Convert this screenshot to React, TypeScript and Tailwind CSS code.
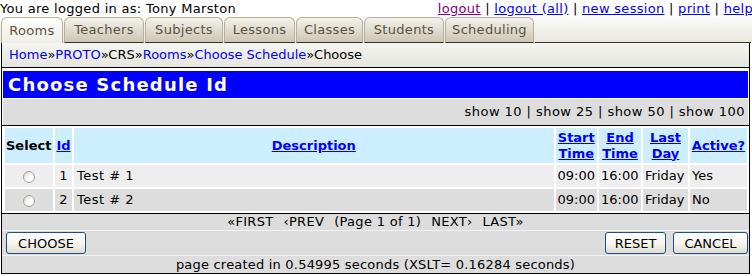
import React from 'react';

const TABS = [
  { label: 'Rooms', width: 'w-[62px]', active: true },
  { label: 'Teachers', width: 'w-[80px]' },
  { label: 'Subjects', width: 'w-[78px]' },
  { label: 'Lessons', width: 'w-[71px]' },
  { label: 'Classes', width: 'w-[67px]' },
  { label: 'Students', width: 'w-[80px]' },
  { label: 'Scheduling', width: 'w-[89px]' },
];

const ROWS = [
  { id: 1, desc: 'Test # 1', start: '09:00', end: '16:00', day: 'Friday', active: 'Yes', bg: 'bg-[#eeeeee]' },
  { id: 2, desc: 'Test # 2', start: '09:00', end: '16:00', day: 'Friday', active: 'No', bg: 'bg-[#dddddd]' },
];

const Radio = () => (
  <span className="inline-block w-[12px] h-[12px] rounded-full border border-[#a3a39a] bg-gradient-to-br from-[#cfcdc4] via-white to-white align-middle" />
);

const XpButton = ({ label, className }: { label: string; className: string }) => (
  <button className={`h-[22px] rounded-[3px] border border-[#1c4f84] bg-gradient-to-b from-white via-[#f6f5f0] to-[#e2ded0] text-[13px] text-black leading-none tracking-normal ${className}`}>
    {label}
  </button>
);

const App: React.FC = () => {
  return (
    <div className="w-[752px] h-[276px] overflow-hidden bg-white text-black text-[13px] leading-[16px] tracking-[0.3px] font-['DejaVu_Sans',sans-serif]">
      {/* logged in line */}
      <div className="flex justify-between items-center h-[17px] whitespace-nowrap">
        <span>You are logged in as: Tony Marston</span>
        <span className="mr-[-1px]">
          <a href="#" className="underline text-[#800080]">logout</a> |{' '}
          <a href="#" className="underline text-[#0000ff]">logout (all)</a> |{' '}
          <a href="#" className="underline text-[#0000ff]">new session</a> |{' '}
          <a href="#" className="underline text-[#0000ff]">print</a> |{' '}
          <a href="#" className="underline text-[#0000ff]">help</a>
        </span>
      </div>

      {/* tabs */}
      <div className="flex items-end h-[26px] pl-[1px] gap-[1px] bg-gradient-to-b from-[#fbfbf9] to-[#e7e7df]">
        {TABS.map((tab) =>
          tab.active ? (
            <div
              key={tab.label}
              className={`${tab.width} h-[26px] flex items-center justify-center rounded-t-[6px] border border-b-0 border-[#b8b09c] bg-gradient-to-b from-[#fdfdfb] to-[#efefe8] text-[#5a5244]`}
            >
              {tab.label}
            </div>
          ) : (
            <div
              key={tab.label}
              className={`${tab.width} h-[26px] flex items-center justify-center rounded-t-[6px] border border-[#b8b09c] border-b-[#3a342c] bg-gradient-to-b from-[#f3f2ec] to-[#cdc6b2] text-[#5a5244]`}
            >
              {tab.label}
            </div>
          )
        )}
        <div className="w-[216px] border-b border-[#3a342c]" />
      </div>

      {/* breadcrumbs */}
      <div className="ml-[1px] w-[749px] h-[25px] flex items-center pl-[7px] border-x border-b border-black bg-gradient-to-b from-[#f5f5f1] to-[#e6e6de] whitespace-nowrap tracking-normal">
        <a href="#" className="text-[#0000ff]">Home</a>»<a href="#" className="text-[#0000ff]">PROTO</a>»CRS»
        <a href="#" className="text-[#0000ff]">Rooms</a>»<a href="#" className="text-[#0000ff]">Choose Schedule</a>»Choose
      </div>

      {/* main panel */}
      <div className="ml-[1px] w-[749px] border-x border-b border-black">
        <div className="pt-[3px] px-[1px]">
          <div className="h-[27px] flex items-center pl-[5px] bg-[#0000ff] text-white text-[18px] font-bold tracking-[1.2px]">
            Choose Schedule Id
          </div>
          <div className="mt-[1px] h-[26px] flex items-center justify-end pr-[3px] bg-[#dddddd] tracking-[0.45px]">
            show 10 | show 25 | show 50 | show 100
          </div>
        </div>
        <div className="border-t border-black pl-[1px]">
          <table className="w-full border-separate border-spacing-[2px] tracking-normal">
            <thead>
              <tr className="bg-[#cceeff] font-bold h-[35px]">
                <th className="w-[48px] px-[1px] font-bold text-left">Select</th>
                <th className="w-[17px] px-[1px]"><a href="#" className="underline text-[#0000ff]">Id</a></th>
                <th className="px-[1px]"><a href="#" className="underline text-[#0000ff]">Description</a></th>
                <th className="w-[41px] px-[1px]"><a href="#" className="underline text-[#0000ff]">Start<br />Time</a></th>
                <th className="w-[42px] px-[1px]"><a href="#" className="underline text-[#0000ff]">End<br />Time</a></th>
                <th className="w-[45px] px-[1px]"><a href="#" className="underline text-[#0000ff]">Last<br />Day</a></th>
                <th className="w-[57px] px-[1px]"><a href="#" className="underline text-[#0000ff]">Active?</a></th>
              </tr>
            </thead>
            <tbody>
              {ROWS.map((row) => (
                <tr key={row.id} className={`${row.bg} h-[22px]`}>
                  <td className="text-center"><Radio /></td>
                  <td className="text-center">{row.id}</td>
                  <td className="px-[3px] tracking-[0.5px]">{row.desc}</td>
                  <td className="px-[2px]">{row.start}</td>
                  <td className="px-[2px]">{row.end}</td>
                  <td className="px-[2px]">{row.day}</td>
                  <td className="px-[2px]">{row.active}</td>
                </tr>
              ))}
            </tbody>
          </table>
        </div>

        <div className="border-t border-black bg-[#dddddd]">
          <div className="h-[17px] flex items-center justify-center gap-[10px] border-b border-[#f2f2f2] whitespace-nowrap">
            <span>«FIRST</span>
            <span>‹PREV</span>
            <span>(Page 1 of 1)</span>
            <span>NEXT›</span>
            <span>LAST»</span>
          </div>
          <div className="h-[25px] flex items-center justify-between pl-[4px] pr-[1px] border-b border-[#f2f2f2]">
            <XpButton label="CHOOSE" className="w-[80px]" />
            <div className="flex gap-[7px]">
              <XpButton label="RESET" className="w-[61px]" />
              <XpButton label="CANCEL" className="w-[75px]" />
            </div>
          </div>
          <div className="h-[17px] flex items-center justify-center whitespace-nowrap tracking-[0.2px]">
            page created in 0.54995 seconds (XSLT= 0.16284 seconds)
          </div>
        </div>
      </div>
    </div>
  );
};

export default App;
